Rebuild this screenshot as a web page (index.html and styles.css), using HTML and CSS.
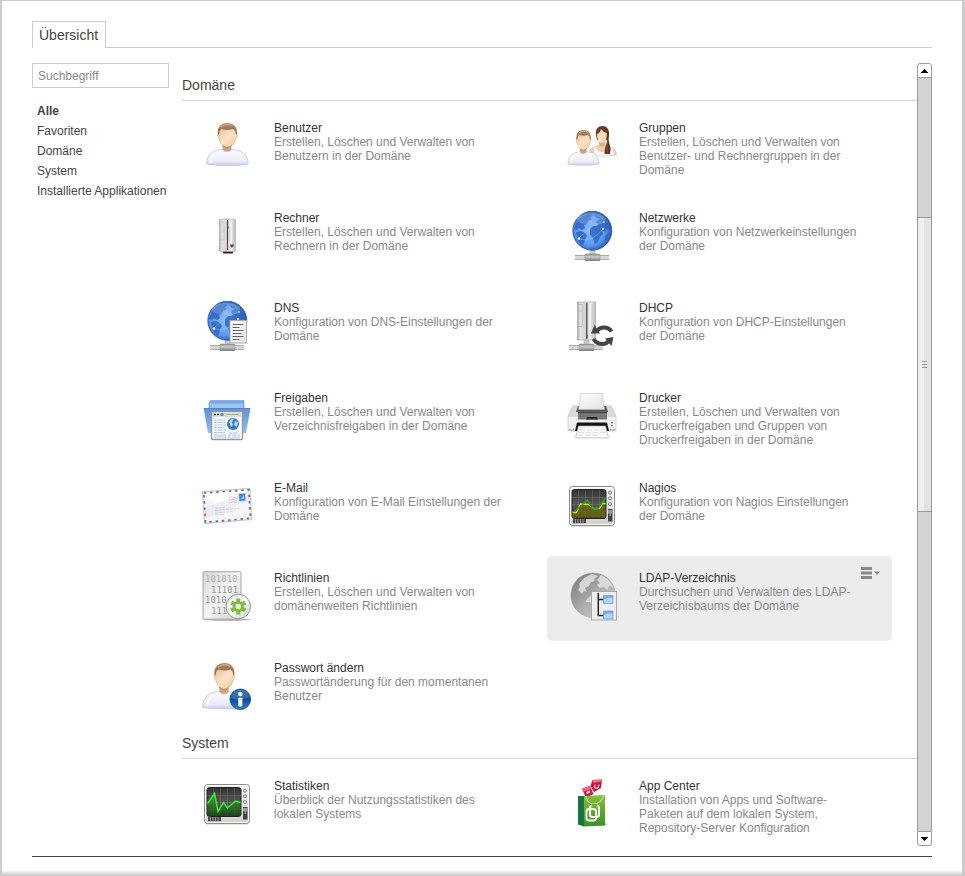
FILE: index.html
```html
<!DOCTYPE html>
<html lang="de">
<head>
<meta charset="utf-8">
<title>Übersicht</title>
<link rel="stylesheet" href="styles.css">
</head>
<body>
<svg class="defs" aria-hidden="true">
  <defs>
    <linearGradient id="skin" x1="0" y1="0" x2="1" y2="1"><stop offset="0" stop-color="#e9bd92"/><stop offset=".5" stop-color="#fbe3c6"/><stop offset="1" stop-color="#edc498"/></linearGradient>
    <linearGradient id="hair" x1="0" y1="0" x2="0" y2="1"><stop offset="0" stop-color="#b28a68"/><stop offset="1" stop-color="#8f6543"/></linearGradient>
    <linearGradient id="shirt" x1="0" y1="0" x2="0" y2="1"><stop offset="0" stop-color="#fcfcff"/><stop offset=".75" stop-color="#e9ebf8"/><stop offset="1" stop-color="#c3cbea"/></linearGradient>
    <radialGradient id="blue" cx=".45" cy=".5" r=".58"><stop offset="0" stop-color="#8dbdff"/><stop offset=".65" stop-color="#5b98f2"/><stop offset="1" stop-color="#164a9c"/></radialGradient>
    <linearGradient id="gray" x1="0" y1="0" x2="1" y2="1"><stop offset="0" stop-color="#777"/><stop offset=".5" stop-color="#aaa"/><stop offset="1" stop-color="#ddd"/></linearGradient>
    <linearGradient id="metal" x1="0" y1="0" x2="0" y2="1"><stop offset="0" stop-color="#8a8a8a"/><stop offset=".4" stop-color="#ccc"/><stop offset="1" stop-color="#777"/></linearGradient>
    <linearGradient id="case" x1="0" y1="0" x2="1" y2="0"><stop offset="0" stop-color="#aaa"/><stop offset=".15" stop-color="#e4e4e2"/><stop offset=".5" stop-color="#d2d2d0"/><stop offset=".75" stop-color="#f8f8f8"/><stop offset="1" stop-color="#b4b4b4"/></linearGradient>
    <linearGradient id="folder" x1="0" y1="0" x2="0" y2="1"><stop offset="0" stop-color="#5c93da"/><stop offset="1" stop-color="#92bdf0"/></linearGradient>
    <linearGradient id="paper" x1="0" y1="0" x2="1" y2="1"><stop offset="0" stop-color="#fff"/><stop offset="1" stop-color="#e2e2e2"/></linearGradient>
    <linearGradient id="sheet" x1="0" y1="0" x2="1" y2="1"><stop offset="0" stop-color="#d6d6d6"/><stop offset=".5" stop-color="#f6f6f6"/><stop offset="1" stop-color="#ccc"/></linearGradient>
    <linearGradient id="frame" x1="0" y1="0" x2="0" y2="1"><stop offset="0" stop-color="#f4f4f2"/><stop offset="1" stop-color="#d0d0cd"/></linearGradient>
    <linearGradient id="screen" x1="0" y1="0" x2="0" y2="1"><stop offset="0" stop-color="#333"/><stop offset=".5" stop-color="#555"/><stop offset="1" stop-color="#333"/></linearGradient>
    <linearGradient id="info" x1="0" y1="0" x2="0" y2="1"><stop offset="0" stop-color="#1a5cae"/><stop offset=".5" stop-color="#0f4b96"/><stop offset="1" stop-color="#2b82d2"/></linearGradient>
    <linearGradient id="bag" x1="0" y1="0" x2="0" y2="1"><stop offset="0" stop-color="#8abf37"/><stop offset="1" stop-color="#3c8f2a"/></linearGradient>
    <linearGradient id="glow" x1="0" y1="0" x2="0" y2="1"><stop offset="0" stop-color="#2db82d" stop-opacity=".7"/><stop offset="1" stop-color="#164a16" stop-opacity=".7"/></linearGradient>

    <symbol id="person" viewBox="0 0 50 50" overflow="visible">
      <path d="M20.500 22h9v7l-4.500 3.500-4.500-3.500z" fill="#cda47d"/>
      <path d="M4.600 43c0-9 5-13.500 15.400-14.600 2 3 8 3 10 0C41 29.500 46 34 46.200 43c-9 2-32.600 2-41.600 0z" fill="url(#shirt)" stroke="#bcc5e6" stroke-width=".8"/>
      <path d="M9 42c0-4 1-6 3-8" fill="none" stroke="#fff" stroke-width="1.500"/>
      <path d="M16.500 10q9-6 18 0v3q1.500 1 .3 3.500l-1 1.500q-1 5-4.300 6.800-4 3-8 0Q18 23 17 18l-1-1.500q-1-2.500.5-3.500z" fill="url(#skin)" stroke="#d6aa80" stroke-width=".5"/>
      <path d="M16 14c-1.200-7 2-12 9.500-12 7 0 10.500 5 9.300 12l-1.300-1.500q.3-3-2-4.500-6 2-12 0-2.500 1.500-2.200 4.500z" fill="url(#hair)"/>
      <path d="M19 6q6-4.500 12-1" fill="none" stroke="#d0ab8b" stroke-width="1.200"/>
      <path d="M19.500 23q5.500 6 11 0l-2 3q-3 2-7 0z" fill="#ad8059" opacity=".6"/>
    </symbol>
    <symbol id="globe" viewBox="0 0 50 50">
      <circle cx="25.300" cy="19.700" r="19.500" fill="url(#blue)" stroke="#164692" stroke-width=".7"/>
      <path d="M8 15l3-6 5-4 5-2 5 .5-3 3 2 1.500-4 2-1 3-3 1 1 3-3 2-3-2-2 2-3-1zM9 21l5-1 4 2 2 3-2 3-1 5-2 2-3-4-2-5zM23 18l3-3 4 0 1-2-2-2 4-4 5 2 4 5 1 5-3-1-2 3-3-2 1 4-3 3-2 5-3 2-2-6-3-3zM38 25l3-2 0 4-3 3zM27 4l5 1 2 2-4 0z" fill="#2a61bd" opacity=".8"/>
      <ellipse cx="24" cy="8" rx="14" ry="6" fill="#fff" opacity=".18"/>
      <path d="M12 27l13-12 13-4M12 28q13 4 24-10" fill="none" stroke="#d8e9ff" stroke-width=".5" opacity=".6"/>
      <g fill="#fff"><circle cx="12" cy="27.500" r="1.200"/><circle cx="37" cy="11" r=".8"/><circle cx="36" cy="18" r="1"/></g>
    </symbol>
    <symbol id="cable" viewBox="0 0 50 50">
      <path d="M23 38h5v6h-5z" fill="#ccc" stroke="#999" stroke-width=".5"/>
      <path d="M8 44h34v5H8z" fill="#ddd"/>
      <path d="M8 44.500h34M8 48.500h34" stroke="#aaa"/><path d="M8 46.500h34" stroke="#bbb" stroke-width=".5"/>
      <rect x="18" y="43" width="15" height="7" rx="1" fill="url(#metal)" stroke="#888" stroke-width=".5"/>
    </symbol>
    <symbol id="monitor" viewBox="0 0 50 50">
      <path d="M4 44h42v1.500H4z" fill="#999" opacity=".5"/>
      <rect x="2.500" y="5.500" width="45" height="39" rx="3" fill="url(#frame)" stroke="#8b8b89"/>
      <rect x="3.500" y="6.500" width="43" height="37" rx="2" fill="none" stroke="#fff" opacity=".8"/>
      <rect x="5" y="8.500" width="34" height="29" rx="2.500" fill="url(#screen)" stroke="#222"/>
      <path d="M11.500 9v28M18.500 9v28M25.500 9v28M32.500 9v28M5 16.500h34M5 23.500h34M5 30.500h34" stroke="#888" stroke-width=".5" opacity=".7"/>
      <g fill="#ddd" stroke="#777" stroke-width=".8"><circle cx="43" cy="11.700" r="1.600"/><circle cx="43" cy="17.300" r="1.600"/><circle cx="43" cy="23" r="1.600"/></g>
      <rect x="41" y="28" width="4.500" height="12.500" fill="#444"/><rect x="41" y="29" width="4.500" height="3.500" fill="#999"/><path d="M43.200 32v3" stroke="#bbb"/>
      <path d="M6 40.200h13" stroke="#444" stroke-width="4"/><path d="M8.500 38.500v3.500M11 38.500v3.500M13.500 38.500v3.500M16 38.500v3.500" stroke="#aaa" stroke-width=".9"/>
    </symbol>
  </defs>
</svg>

<div class="window">
  <header class="tabs"><a class="tab" href="#uebersicht">Übersicht</a></header>

  <main class="content" id="uebersicht">
    <aside class="sidebar">
      <input class="search" type="text" placeholder="Suchbegriff" aria-label="Suchbegriff">
      <nav>
        <ul class="categories">
          <li><a class="active" href="#alle">Alle</a></li>
          <li><a href="#favoriten">Favoriten</a></li>
          <li><a href="#domaene">Domäne</a></li>
          <li><a href="#system">System</a></li>
          <li><a href="#apps">Installierte Applikationen</a></li>
        </ul>
      </nav>
    </aside>

    <div class="gallery">
      <section class="section" id="domaene">
        <h2>Domäne</h2>
        <div class="grid">
          <article class="card">
            <svg class="icon" viewBox="0 0 50 50"><use href="#person"/></svg>
            <div class="text"><h3>Benutzer</h3><p>Erstellen, Löschen und Verwalten von Benutzern in der Domäne</p></div>
          </article>
          <article class="card">
            <svg class="icon" viewBox="0 0 50 50">
              <path d="M32 19h6v6l-3 3-3-3z" fill="#d9ad86"/>
              <path d="M22 34q0-7 5-8l5-2q3 3 6 0l6 2q5 1 5.700 8-14 2.500-27.700 0z" fill="#f0cda8" stroke="#ddb48d" stroke-width=".4"/>
              <path d="M27 26l2 0q1 5 7 5t8-5l1.500.3 1.500 8q-11 1.500-20 0z" fill="#fafaff" stroke="#ddd" stroke-width=".5"/>
              <path d="M29 14c-.8-6 2-9 6.500-9 5 0 7 4 6.500 9l-1 5H30z" fill="#6b3b22"/>
              <path d="M30 13q3-1 4-5 2 3 6 4 0 7-3 9.500-2 1.500-4 0Q30 19 30 13z" fill="url(#skin)"/>
              <path d="M40 9q3 3 1.500 8 0 3 1 6 2 5 .5 10h-5.500q0-5 1.500-9 2-5 1-15z" fill="#62331d"/>
              <path d="M41 19q-1.500 7-.5 13" stroke="#92583b" stroke-width=".7" fill="none"/>
              <use href="#person" width="50" height="50" transform="translate(-2.500 7.300) scale(.75 .83)"/>
            </svg>
            <div class="text"><h3>Gruppen</h3><p>Erstellen, Löschen und Verwalten von Benutzer- und Rechnergruppen in der Domäne</p></div>
          </article>
          <article class="card">
            <svg class="icon" viewBox="0 0 50 50">
              <rect x="21" y="39" width="10" height="3.500" rx="1" fill="#222"/>
              <rect x="17.300" y="8" width="16.200" height="32.500" rx="1.200" fill="url(#case)" stroke="#aaa" stroke-width=".6"/>
              <path d="M25.500 9v30" stroke="#444" stroke-width="1.100"/><path d="M25.500 33v4" stroke="#a33"/><path d="M26.500 15v3" stroke="#6bb8dd"/>
              <path d="M18.500 20h4M18.500 11h3.500v18h-3.500M31 10v27M28 15v15" stroke="#bbb" stroke-width=".5" fill="none"/>
              <path d="M28 33.500h4l-1 2.500-2 .5z" fill="#444"/>
            </svg>
            <div class="text"><h3>Rechner</h3><p>Erstellen, Löschen und Verwalten von Rechnern in der Domäne</p></div>
          </article>
          <article class="card">
            <svg class="icon" viewBox="0 0 50 50"><use href="#cable"/><use href="#globe"/></svg>
            <div class="text"><h3>Netzwerke</h3><p>Konfiguration von Netzwerkeinstellungen der Domäne</p></div>
          </article>
          <article class="card">
            <svg class="icon" viewBox="0 0 50 50"><use href="#cable"/><use href="#globe"/>
              <rect x="28" y="19.500" width="16.500" height="22.500" fill="url(#paper)" stroke="#aaa"/>
              <path d="M30.500 23.500h11M30.500 26.500h7M30.500 29.500h11M30.500 32.500h9M30.500 35.500h11M30.500 38.500h7" stroke="#666"/>
            </svg>
            <div class="text"><h3>DNS</h3><p>Konfiguration von DNS-Einstellungen der Domäne</p></div>
          </article>
          <article class="card">
            <svg class="icon" viewBox="0 0 50 50">
              <use href="#cable" x="-6" width="50" height="50"/>
              <rect x="10.500" y="1" width="18" height="38" fill="url(#case)" stroke="#999" stroke-width=".6"/>
              <path d="M19.800 2v36" stroke="#333" stroke-width="1.100"/><path d="M20 34v3" stroke="#b22" stroke-width="1.200"/><path d="M20.500 7v3" stroke="#4cb5c9"/>
              <path d="M11.500 3.500h4v22h-4M11.500 10h4M25 3v34" fill="none" stroke="#aaa" stroke-width=".6"/>
              <path d="M29 31q3-4.500 8-4.500 5 0 7.500 4" fill="none" stroke="#444" stroke-width="4"/><path d="M24 32.500l3.500-8.500 5.500 8.500z" fill="#444"/>
              <path d="M26.500 38q3 5 9 5 4.500 0 7-4" fill="none" stroke="#444" stroke-width="4"/><path d="M38 37.500l8.500-1.500-2 9z" fill="#444"/>
            </svg>
            <div class="text"><h3>DHCP</h3><p>Konfiguration von DHCP-Einstellungen der Domäne</p></div>
          </article>
          <article class="card">
            <svg class="icon" viewBox="0 0 50 50">
              <path d="M7 40V12l1.500-2.500h15l1.500 0H42V40z" fill="#78a9e7" stroke="#6796d3" stroke-width=".6"/>
              <path d="M8 12.500h33v5H8z" fill="#9dc3f2"/>
              <path d="M1.500 17h47L44 42H6z" fill="url(#folder)"/><path d="M2 17.500h46" stroke="#4c82c8" stroke-width=".8"/>
              <rect x="9.500" y="20.500" width="31" height="28" rx="1" fill="#f6f8fa" stroke="#96979a" stroke-width="1.300"/>
              <path d="M10 21h30v5H10z" fill="#ddd"/>
              <path d="M12 23.500h2M15 23.500h2" stroke="#444" stroke-width="1.300"/><circle cx="20" cy="23.500" r="1.600" fill="#3d81c8"/><path d="M24 23.500h13" stroke="#aaa"/>
              <path d="M12 29h11M12 31.500h11M12 34h12M12 36.500h10M12 39h12M12 41.500h11M12 44h12M12 46h12M27 42h9M26 44h12M26 46h12" stroke="#a3c6ec" stroke-dasharray="3 .7 5 .6"/>
              <circle cx="31" cy="33" r="6" fill="#3678c2"/><path d="M27 31q2-4 5-3l-2 3 1 3-2 2zM33 30l3 1-1 5-3-2z" fill="#b7daf7"/>
            </svg>
            <div class="text"><h3>Freigaben</h3><p>Erstellen, Löschen und Verwalten von Verzeichnisfreigaben in der Domäne</p></div>
          </article>
          <article class="card">
            <svg class="icon" viewBox="0 0 50 50">
              <path d="M6 15h38l5 10v13q0 2-2 2H3q-2 0-2-2V25z" fill="#d9dada" stroke="#b8b8b8" stroke-width=".6"/>
              <path d="M11 15h28l2 6H9z" fill="#555"/>
              <path d="M14 2.500h21l2.500 16h-26z" fill="url(#paper)" stroke="#bbb" stroke-width=".6"/>
              <path d="M1.500 26h47v12h-47z" fill="#efefef"/><path d="M1.500 39h47" stroke="#aaa" stroke-width="1.200"/>
              <path d="M11 20.500h29v8H11z" fill="#777"/><path d="M11 21.500h29" stroke="#444" stroke-width="1.200"/><path d="M20 26h10l1 2.500H19z" fill="#2c2c2c"/>
              <path d="M10 31.500h30l2 8.500H8z" fill="#151515"/>
              <path d="M11.500 35h27l3 12H8.500z" fill="#f8f8f8" stroke="#aaa" stroke-width=".6"/><path d="M13 39h23M12 41.500h26M11 44h20" stroke="#ddd" stroke-width=".8" stroke-dasharray="5 2"/>
              <path d="M45 31v1.500M45 34v1.500" stroke="#777" stroke-width="1.500"/>
            </svg>
            <div class="text"><h3>Drucker</h3><p>Erstellen, Löschen und Verwalten von Druckerfreigaben und Gruppen von Druckerfreigaben in der Domäne</p></div>
          </article>
          <article class="card">
            <svg class="icon" viewBox="0 0 50 50">
              <path d="M.5 10.700L48 7.300l1.700 31.200-47.200 4z" fill="#f4f6f9" stroke="#aaa" stroke-width=".7"/>
              <path d="M1.500 12L46 9 20 29z" fill="#fff"/><path d="M2 27l45-17v9L3 38z" fill="#dfe6ef" opacity=".6"/>
              <path d="M1.800 12l45-3.200 1.700 28.500-45 4z" fill="none" stroke="#e04136" stroke-width="1.700" stroke-dasharray="2.500 10"/>
              <path d="M1.800 12l45-3.200 1.700 28.500-45 4z" fill="none" stroke="#3f78c5" stroke-width="1.700" stroke-dasharray="2.500 10" stroke-dashoffset="-6.200"/>
              <path d="M36.500 12.500l7-.5.5 8-7 .5z" fill="#4186dc" stroke="#deebfa" stroke-width=".8"/><path d="M39 18l3-4v4z" fill="#a9d0f6"/>
              <path d="M27 17q3-3 8 1M27 19.500q3-3 8 1M27 22q3-3 8 0" stroke="#efb6bd" stroke-width=".7" fill="none"/>
              <path d="M13 27l11-.8M13 29.500l24-2M13 32l18-1.500M13 34l9-.7" stroke="#c6c9d0" stroke-width=".8" stroke-dasharray="3 .7"/>
            </svg>
            <div class="text"><h3>E-Mail</h3><p>Konfiguration von E-Mail Einstellungen der Domäne</p></div>
          </article>
          <article class="card">
            <svg class="icon" viewBox="0 0 50 50"><use href="#monitor"/>
              <path d="M5.500 31.500H10L14 24.500l8-1.500 4 4.500h6l3-4h3.500v13h-33z" fill="#6a6416" opacity=".85"/>
              <path d="M5.500 31.500H9.500l4-8.500 8 .5 5 4h6l3-5h3" fill="none" stroke="#f0d913" stroke-width="1.300"/>
              <path d="M7 31l8-7 5.500-5 5 8.500 5 .5 8-11" fill="none" stroke="#16ad26" stroke-width="1.300"/>
            </svg>
            <div class="text"><h3>Nagios</h3><p>Konfiguration von Nagios Einstellungen der Domäne</p></div>
          </article>
          <article class="card">
            <svg class="icon" viewBox="0 0 50 50">
              <ellipse cx="25" cy="48.500" rx="24" ry="1.500" fill="#777" opacity=".5"/>
              <rect x="1" y=".7" width="38" height="47.500" rx="1" fill="url(#sheet)" stroke="#a4a4a4"/>
              <g class="bits"><text x="3" y="11" fill="#aaa">101010</text><text x="9" y="22">11101</text><text x="3" y="32">1010</text><text x="9" y="43">111</text></g>
              <circle cx="36.300" cy="35.500" r="12.300" fill="url(#sheet)" stroke="#999"/>
              <path d="M26 32q5-8 14-6 6 1 7 7-10-3-21 4z" fill="#fff" opacity=".7"/>
              <g stroke="#7cbf40" stroke-width="4"><path d="M36.300 27.500v16M29.300 31.500l14 8M43.300 31.500l-14 8"/></g>
              <circle cx="36.300" cy="35.500" r="5.600" fill="#7cbf40"/><circle cx="36.300" cy="35.500" r="2.800" fill="#f4f4f4"/>
            </svg>
            <div class="text"><h3>Richtlinien</h3><p>Erstellen, Löschen und Verwalten von domänenweiten Richtlinien</p></div>
          </article>
          <article class="card hovered">
            <svg class="icon" viewBox="0 0 50 50">
              <circle cx="26.200" cy="24.200" r="22.300" fill="url(#gray)" stroke="#999" stroke-width=".5"/>
              <path d="M12 13l5-6 8-4 6 2-4 3 1 2-4 1-2 4-4 2 2 4-3-1-2 3-4-4 2-3zM30 9l4-5q9 4 12 12l-4-1-2 4-3-3-4 1-3-3 3-2zM18 31l5-6 7-3 6 2 5-2v20l-12 4-5-6 2-5-3-4z" fill="#e2e2e2" opacity=".85"/>
              <rect x="24.500" y="20.500" width="25" height="28.500" fill="#eeefed" stroke="#aaa"/>
              <path d="M31.300 22v22.500h6M31.300 28.500h6" fill="none" stroke="#222" stroke-width="1.500"/>
              <g fill="#79acef" stroke="#6a9fe0" stroke-width=".8"><path d="M36.500 24.500h9.500v8h-9.500zM36.500 40h9.500v8h-9.500z"/></g>
              <path d="M37 28.500l4-1.500h4.500v5H37zM37 44l4-1.500h4.500v5H37z" fill="#b7d5fa"/>
            </svg>
            <div class="text"><h3>LDAP-Verzeichnis</h3><p>Durchsuchen und Verwalten des LDAP-Verzeichisbaums der Domäne</p></div>
            <button class="menu" type="button" aria-label="Menü"><svg viewBox="0 0 20 12"><path d="M1 0h11v3H1zM1 4.500h11v3H1zM1 9h11v3H1zM14 4.500h6l-3 3.500z" fill="#888"/></svg></button>
          </article>
          <article class="card">
            <svg class="icon" viewBox="0 0 50 50">
              <use href="#person" width="50" height="50" transform="translate(-4 -.2) scale(1.040 1.080)"/>
              <circle cx="38.300" cy="38.300" r="10.300" fill="url(#info)" stroke="#0d478e" stroke-width=".8"/>
              <path d="M29 37q9 4 18.500-1-2-7.500-9.500-7.500T29 37z" fill="#79afe3" opacity=".3"/>
              <circle cx="38.300" cy="33" r="2.300" fill="#fff"/><rect x="36.200" y="36.500" width="4.200" height="9" rx="1" fill="#f0f0f0"/>
            </svg>
            <div class="text"><h3>Passwort ändern</h3><p>Passwortänderung für den momentanen Benutzer</p></div>
          </article>
        </div>
      </section>

      <section class="section" id="system">
        <h2>System</h2>
        <div class="grid">
          <article class="card">
            <svg class="icon" viewBox="0 0 50 50"><use href="#monitor"/>
              <path d="M5.500 25l7-10 4 18 5-9 4 5 8-7 5 2v13h-33z" fill="url(#glow)"/>
              <path d="M5.500 24.500l3-4 4-6 3.500 18 5.500-9 4 5.500 8-7 5 1.500" fill="none" stroke="#36f12d" stroke-width="1.500"/>
            </svg>
            <div class="text"><h3>Statistiken</h3><p>Überblick der Nutzungsstatistiken des lokalen Systems</p></div>
          </article>
          <article class="card">
            <svg class="icon" viewBox="0 0 50 50">
              <path d="M32 47l9-1-3-3z" fill="#aaa" opacity=".6"/>
              <path d="M15 9.500l8-2.500 3.500 8-7.500 4z" fill="#d41742"/><path d="M15 9.500l8-2.500 1 3-7 2.500z" fill="#f06680"/>
              <path d="M25.500 1l9.500-.5-1 8.500-7 4-3.500-6z" fill="#cf153e"/><path d="M25.500 1l9.500-.5-.5 2-8 1.500z" fill="#ee7088"/>
              <path d="M19.500 14l3.500-1.500" stroke="#fff" stroke-width="2"/><path d="M28 5.500l-.5 3.500 3.500 0 1-3.500" fill="none" stroke="#fff"/>
              <path d="M11 17h6v30.500l-6-2z" fill="#147442"/><path d="M17 17l21-1v30.500l-21 1z" fill="url(#bag)"/>
              <path d="M19 17q1 8 8 8t10-9" fill="none" stroke="#c3d6b4" stroke-width="1.200"/>
              <rect x="19.500" y="30" width="9.500" height="11.500" rx="2.500" fill="none" stroke="#fff" stroke-width="1.800"/>
              <rect x="23" y="26.500" width="9" height="11.500" rx="2.500" fill="none" stroke="#fff" stroke-width="2"/>
              <path d="M24.500 25h6v3h-6z" fill="#6fb034"/>
            </svg>
            <div class="text"><h3>App Center</h3><p>Installation von Apps und Software-Paketen auf dem lokalen System, Repository-Server Konfiguration</p></div>
          </article>
        </div>
      </section>
    </div>

    <div class="scrollbar">
      <button class="arrow up" type="button" aria-label="Nach oben"><svg viewBox="0 0 7 4" shape-rendering="crispEdges"><path d="M3 0h1v1h1v1h1v1h1v1H0V3h1V2h1V1h1z"/></svg></button>
      <div class="track"><div class="thumb"><i></i><i></i><i></i></div></div>
      <button class="arrow down" type="button" aria-label="Nach unten"><svg viewBox="0 0 7 4" shape-rendering="crispEdges"><path d="M0 0h7v1H6v1H5v1H4v1H3V3H2V2H1V1H0z"/></svg></button>
    </div>
  </main>
  <footer class="footer"></footer>
</div>
</body>
</html>
```
FILE: styles.css
```css
* { box-sizing: border-box; }

body {
  margin: 0;
  background: #fff;
  color: #444;
  font: 12px/14px "Liberation Sans", Arial, sans-serif;
}

h2, h3, p, ul { margin: 0; padding: 0; font-weight: normal; }
a { color: inherit; text-decoration: none; }
button { padding: 0; border: 0; background: none; font: inherit; }
.defs { position: absolute; width: 0; height: 0; }

.window {
  display: flex;
  flex-direction: column;
  height: 100vh;
  padding: 20px 30px 0;
  border: solid #ccc;
  border-width: 1px 3px 0 2px;
  background: linear-gradient(to top, #c4c4c4, #fff 6px);
}

.tabs {
  display: flex;
  flex: none;
  height: 27px;
}
.tabs::after { content: ""; flex: 1; border-bottom: 1px solid #ccc; }
.tab {
  padding: 0 7px 0 6px;
  border: 1px solid #ccc;
  border-bottom: 0;
  font-size: 14px;
  line-height: 27px;
}

.content {
  display: flex;
  flex: 1;
  min-height: 0;
  padding: 15px 0 10px;
}

.sidebar { flex: none; width: 150px; }
.search {
  display: block;
  width: 137px;
  height: 25px;
  padding: 0 5px;
  border: 1px solid #ccc;
  border-radius: 0;
  background: #fff;
  color: #444;
  font: inherit;
}
.search::placeholder { color: #888; opacity: 1; }
.categories {
  padding: 13px 0 0 5px;
  list-style: none;
  line-height: 20px;
  white-space: nowrap;
}
.active { font-weight: bold; }

.gallery {
  flex: 1;
  min-width: 0;
  padding-top: 14px;
  overflow: hidden;
}
.section { margin-bottom: 4px; }
.section h2 {
  margin-bottom: 5px;
  padding-bottom: 7px;
  border-bottom: 1px solid #d3d3d3;
  font-size: 14px;
  line-height: 16px;
}
.grid {
  display: grid;
  grid-template-columns: repeat(auto-fill, 345px);
  gap: 5px 20px;
}
.card {
  position: relative;
  display: flex;
  gap: 22px;
  height: 85px;
  padding: 15px 26px 0 20px;
  border-radius: 5px;
}
.hovered { background: #ececec; }
.icon { flex: none; width: 50px; height: 50px; }
.text { flex: 1; min-width: 0; }
.text h3 { color: #333; font-size: 12px; }
.text p { color: #888; }
.bits { fill: #999; font: 9px "DejaVu Sans Mono", monospace; }
.menu {
  position: absolute;
  top: 11px;
  right: 12px;
  width: 20px;
  height: 12px;
}
.menu svg { display: block; }

.scrollbar {
  display: flex;
  flex: none;
  flex-direction: column;
  width: 15px;
}
.arrow {
  display: flex;
  flex: none;
  align-items: center;
  justify-content: center;
  height: 15px;
  border: 1px solid #999;
  background: #fff;
}
.arrow svg { width: 7px; height: 4px; }
.up { border-radius: 3px 3px 0 0; }
.down { border-radius: 0 0 3px 3px; }
.track {
  display: grid;
  flex: 1;
  grid-template-rows: 139fr 295fr 319fr;
  border: solid #999;
  border-width: 0 1px;
  background: #d3d3d3;
}
.thumb {
  display: flex;
  grid-row: 2;
  flex-direction: column;
  align-items: center;
  justify-content: center;
  gap: 2px;
  border: solid #999;
  border-width: 1px 0;
  background: linear-gradient(to right, #efefef 50%, #e3e3e3 50%);
}
.thumb i { width: 5px; height: 1px; background: #999; }

.footer { flex: none; height: 20px; border-top: 1px solid #444; }
```
